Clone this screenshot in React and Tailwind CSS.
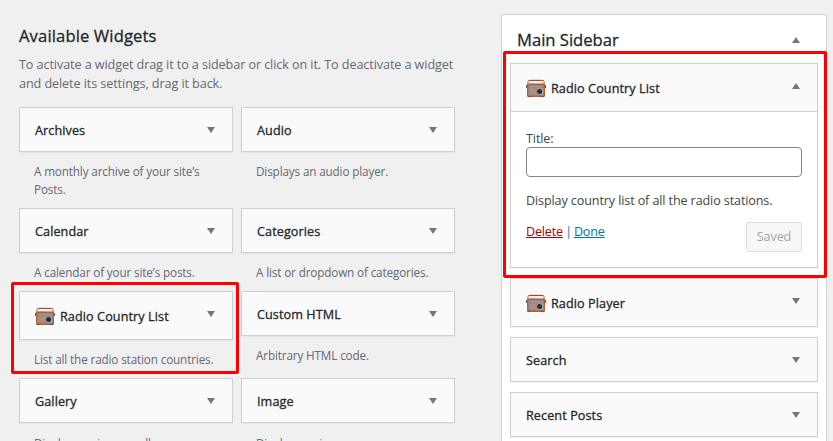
import React from "react";

function Arrow({ up = false, className = "" }) {
  return (
    <svg className={`h-[6px] w-2 shrink-0 ${className}`} viewBox="0 0 8 6" fill="#72777c">
      {up ? <path d="M4 0 8 6H0Z" /> : <path d="M0 0H8L4 6Z" />}
    </svg>
  );
}

function RadioIcon() {
  return (
    <svg className="mr-[5px] h-5 w-5 shrink-0" viewBox="0 0 20 20">
      <path d="M2 6V3c0-1 .5-1.500 1.500-1.500h13C17.500 1.500 18 2 18 3v3" fill="none" stroke="#b4552f" strokeWidth="1.1" />
      <path d="M3.400 1.300h13.200" stroke="#6b5750" strokeWidth="0.8" />
      <rect x="2.600" y="2.200" width="14.800" height="2.600" fill="#f1eae6" />
      <path d="M0 6h2v3H0zM18 6h2v3h-2z" fill="#625f61" />
      <rect x="1" y="4.600" width="18" height="13.400" rx="1.200" fill="#bd5b32" />
      <rect x="2" y="6" width="16" height="10.800" rx="0.600" fill="#8d8280" />
      <path d="M4.500 5.200h4.500" stroke="#8a7c78" strokeWidth="1" />
      <path d="M3.500 7.700h13" stroke="#b5a8a2" strokeWidth="0.900" />
      <rect x="3.300" y="9.300" width="7.200" height="6.200" fill="#b18e7e" />
      <rect x="10.800" y="9.300" width="6.400" height="6.700" fill="#aaa09b" />
      <circle cx="13.600" cy="12.500" r="2.500" fill="#1f2e43" />
      <path d="M2 17.600h3M15 17.600h3" stroke="#7c4a3a" strokeWidth="0.900" />
    </svg>
  );
}

function WidgetBar({ title, icon = false, open = false }) {
  return (
    <div
      className={`flex items-start justify-between bg-[#fafafa] pl-[15px] pr-[17px] ${icon ? "h-[47px] pt-[15px]" : "h-[43px] pt-[14px]"}`}
    >
      <div className="flex items-center">
        {icon && <RadioIcon />}
        <h3 className="whitespace-nowrap text-[12.6px] font-medium leading-[18px] tracking-[0.1px] text-[#23282d] [-webkit-text-stroke:0.3px_#23282d]">{title}</h3>
      </div>
      <Arrow up={open} className={icon ? "mt-[4px]" : "mt-[5px]"} />
    </div>
  );
}

function Available({ title, description, icon, height, gap = "pt-[10px]" }) {
  return (
    <div className={`w-[214px] ${height}`}>
      <div className="border border-[#ccd0d4] shadow-[0_1px_1px_rgba(0,0,0,0.04)]">
        <WidgetBar title={title} icon={icon} />
      </div>
      <p className={`whitespace-nowrap pl-[15px] text-[11.7px] leading-[18px] tracking-[-0.13px] text-[#646970] ${gap}`}>
        {description}
      </p>
    </div>
  );
}

function Placed({ title, icon, open, children }) {
  return (
    <div className="border border-[#ccd0d4] bg-white shadow-[0_1px_1px_rgba(0,0,0,0.04)]">
      <WidgetBar title={title} icon={icon} open={open} />
      {children}
    </div>
  );
}

export default function App() {
  return (
    <div className="relative flex h-[441px] w-[833px] overflow-hidden bg-[#f0f0f0] font-['Open_Sans','Noto_Sans',sans-serif] text-[12.6px] text-[#444]">
      <section className="w-[501px] shrink-0 pl-[19px] pt-[25px]">
        <h2 className="text-[16.6px] font-medium leading-[22px] tracking-[0.13px] text-[#23282d] [-webkit-text-stroke:0.3px_#23282d]">Available Widgets</h2>
        <p className="mt-[8px] whitespace-nowrap leading-[19px] tracking-[-0.08px] text-[#646970]">
          To activate a widget drag it to a sidebar or click on it. To deactivate a widget
          <br />
          and delete its settings, drag it back.
        </p>
        <div className="mt-[14px] flex gap-2">
          <div className="w-[214px]">
            <Available title="Archives" description={<>A monthly archive of your site’s<br />Posts.</>} height="h-[101px]" />
            <Available title="Calendar" description="A calendar of your site’s posts." height="h-[83px]" />
            <Available icon title="Radio Country List" description="List all the radio station countries." height="h-[87px]" />
            <Available title="Gallery" description="Displays an image gallery." height="h-[90px]" gap="pt-[11px]" />
          </div>
          <div className="w-[214px]">
            <Available title="Audio" description="Displays an audio player." height="h-[101px]" />
            <Available title="Categories" description="A list or dropdown of categories." height="h-[83px]" />
            <Available title="Custom HTML" description="Arbitrary HTML code." height="h-[87px]" />
            <Available title="Image" description="Displays an image." height="h-[90px]" gap="pt-[11px]" />
          </div>
        </div>
      </section>

      <aside className="mt-[14px] h-[440px] w-[326px] shrink-0 border border-[#ccd0d4] bg-white px-2">
        <div className="flex h-[48px] items-center justify-between pl-[7px] pr-[18px]">
          <h2 className="pt-[3px] text-[16.6px] font-medium text-[#23282d] [-webkit-text-stroke:0.3px_#23282d]">Main Sidebar</h2>
          <Arrow up className="mt-[1px]" />
        </div>
        <Placed icon open title="Radio Country List">
          <div className="h-[156px] border-t border-[#ccd0d4] px-[15px] pt-[18px] tracking-[-0.12px]">
            <label className="block leading-[17px]">
              Title:
              <input type="text" className="block h-[30px] w-full rounded border border-[#7e8993] bg-white px-2 outline-none" />
            </label>
            <p className="mt-[14px] whitespace-nowrap leading-[19px]">Display country list of all the radio stations.</p>
            <div className="mt-[12px] flex items-start justify-between">
              <div className="whitespace-nowrap leading-[19px] tracking-[-0.2px]">
                <a className="text-[#a00] underline">Delete</a>
                <span className="text-[#0073aa] tracking-[-0.8px]"> | </span>
                <a className="text-[#0073aa] underline">Done</a>
              </div>
              <button className="h-[30px] w-[56px] rounded-[3px] border border-[#ddd] bg-[#f7f7f7] pt-px text-[#a0a5aa]">Saved</button>
            </div>
          </div>
        </Placed>
        <div className="mt-[10px] flex flex-col gap-[10px]">
          <Placed icon title="Radio Player" />
          <Placed title="Search" />
          <Placed title="Recent Posts" />
        </div>
      </aside>

      <div className="pointer-events-none absolute left-[11px] top-[282px] h-[92px] w-[228px] rounded-[2px] border-[3px] border-[#f00]" />
      <div className="pointer-events-none absolute left-[503px] top-[51px] h-[227px] w-[324px] rounded-[2px] border-[3px] border-[#f00]" />
    </div>
  );
}
